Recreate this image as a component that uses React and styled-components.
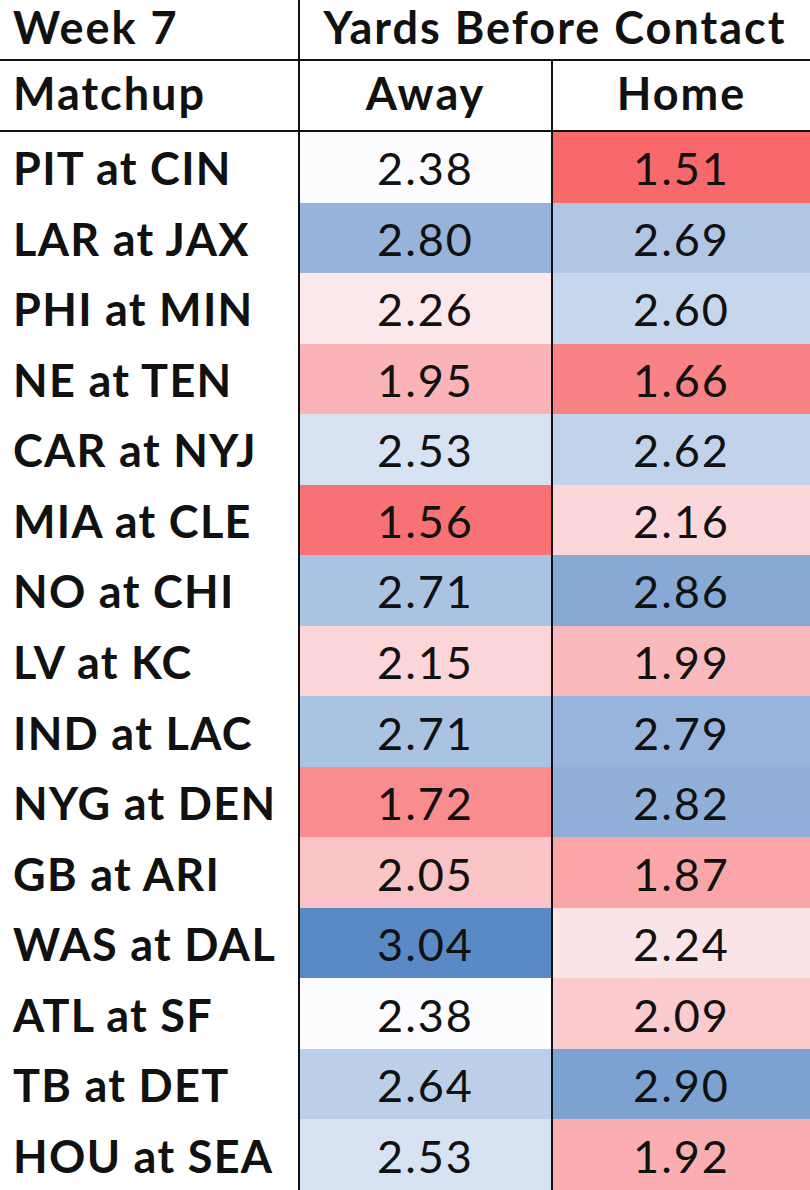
import styled, { createGlobalStyle } from "styled-components";

const GlobalStyle = createGlobalStyle`
  html, body {
    margin: 0;
    padding: 0;
    background: #ffffff;
  }
`;

const rows = [
  ["PIT at CIN", 2.38, 1.51],
  ["LAR at JAX", 2.8, 2.69],
  ["PHI at MIN", 2.26, 2.6],
  ["NE at TEN", 1.95, 1.66],
  ["CAR at NYJ", 2.53, 2.62],
  ["MIA at CLE", 1.56, 2.16],
  ["NO at CHI", 2.71, 2.86],
  ["LV at KC", 2.15, 1.99],
  ["IND at LAC", 2.71, 2.79],
  ["NYG at DEN", 1.72, 2.82],
  ["GB at ARI", 2.05, 1.87],
  ["WAS at DAL", 3.04, 2.24],
  ["ATL at SF", 2.38, 2.09],
  ["TB at DET", 2.64, 2.9],
  ["HOU at SEA", 2.53, 1.92],
];

// excel style 3-colour scale: red (min) -> white (median) -> blue (max)
const allValues = rows.flatMap((r) => [r[1], r[2]]).sort((a, b) => a - b);
const MIN = allValues[0];
const MAX = allValues[allValues.length - 1];
const MID = (allValues[14] + allValues[15]) / 2;

const RED = [248, 105, 107];
const WHITE = [252, 252, 255];
const BLUE = [90, 138, 198];

const mix = (a, b, t) =>
  `rgb(${a.map((v, i) => Math.round(v + (b[i] - v) * t)).join(",")})`;

const scaleColor = (v) => {
  if (v <= MID) return mix(RED, WHITE, (v - MIN) / (MID - MIN));
  return mix(WHITE, BLUE, (v - MID) / (MAX - MID));
};

const App = () => {
  return (
    <>
      <GlobalStyle />
      <Sheet>
        <TitleCell>Week 7</TitleCell>
        <GroupCell>Yards Before Contact</GroupCell>
        <HeadCell>Matchup</HeadCell>
        <HeadCell $center>Away</HeadCell>
        <HeadCell $center $divider>Home</HeadCell>
        {rows.map(([game, away, home]) => (
          <Row key={game}>
            <GameCell>{game}</GameCell>
            <ValueCell $bg={scaleColor(away)}>{away.toFixed(2)}</ValueCell>
            <ValueCell $bg={scaleColor(home)} $divider>
              {home.toFixed(2)}
            </ValueCell>
          </Row>
        ))}
      </Sheet>
    </>
  );
};

const Sheet = styled.div`
  width: 810px;
  height: 1190px;
  display: grid;
  grid-template-columns: 300px 251px 259px;
  grid-template-rows: 61px 71px repeat(15, 1fr);
  font-family: Lato, "Open Sans", sans-serif;
  color: #111;
  background: #fff;
  overflow: hidden;
`;

const Cell = styled.div`
  display: flex;
  align-items: center;
  box-sizing: border-box;
  font-size: 45px;
  line-height: 1;
  letter-spacing: 2px;
  white-space: nowrap;
`;

const TitleCell = styled(Cell)`
  font-weight: 700;
  padding: 0 0 5px 13px;
  border-right: 2px solid #111;
  border-bottom: 2px solid #111;
`;

const GroupCell = styled(Cell)`
  grid-column: 2 / 4;
  justify-content: center;
  font-weight: 700;
  padding-bottom: 5px;
  border-bottom: 2px solid #111;
`;

const HeadCell = styled(Cell)`
  font-weight: 700;
  justify-content: ${(p) => (p.$center ? "center" : "flex-start")};
  padding: 0 0 5px ${(p) => (p.$center ? "0" : "13px")};
  border-right: ${(p) => (p.$center ? "none" : "2px solid #111")};
  border-left: ${(p) => (p.$divider ? "2px solid #111" : "none")};
  border-bottom: 2px solid #111;
`;

const Row = styled.div`
  display: contents;
`;

const GameCell = styled(Cell)`
  font-weight: 700;
  letter-spacing: 1.3px;
  padding: 3px 0 0 13px;
  border-right: 2px solid #111;
`;

const ValueCell = styled(Cell)`
  justify-content: center;
  padding-top: 3px;
  background: ${(p) => p.$bg};
  border-left: ${(p) => (p.$divider ? "2px solid #111" : "none")};
`;

export default App;
